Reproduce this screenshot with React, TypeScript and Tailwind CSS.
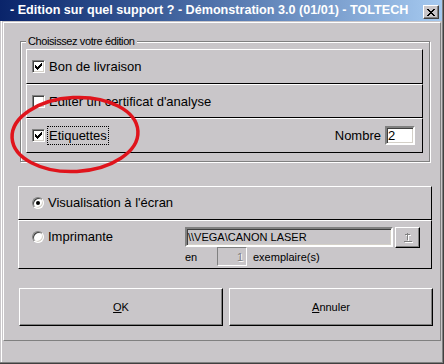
const FACE = "bg-[#c9c6c9]";

function CheckBox({ checked }: { checked: boolean }) {
  const px = [
    [6, 0, 1], [5, 1, 2], [0, 2, 1], [4, 2, 3], [0, 3, 2], [3, 3, 3], [0, 4, 5], [1, 5, 3], [2, 6, 1],
  ];
  return (
    <span className="flex h-[13px] w-[13px] shrink-0 items-center justify-center border border-t-[#808080] border-l-[#808080] border-b-white border-r-white bg-white shadow-[inset_1px_1px_0_#404040,inset_-1px_-1px_0_#d4d0c8]">
      {checked && (
        <svg width="7" height="7" viewBox="0 0 7 7" shapeRendering="crispEdges">
          {px.map(([x, y, w]) => (
            <rect key={`${x}-${y}`} x={x} y={y} width={w} height={1} fill="#000" />
          ))}
        </svg>
      )}
    </span>
  );
}

function Radio({ checked }: { checked: boolean }) {
  return (
    <span className="flex h-[12px] w-[12px] shrink-0 items-center justify-center rounded-full border border-t-[#808080] border-l-[#808080] border-b-white border-r-white bg-white shadow-[inset_1px_1px_0_#404040,inset_-1px_-1px_0_#d4d0c8]">
      {checked && <span className="h-[4px] w-[4px] rounded-full bg-black" />}
    </span>
  );
}

function PushButton({ children }: { children: React.ReactNode }) {
  return (
    <div className="flex h-[38px] w-[204px] items-center justify-center border border-t-white border-l-white border-b-black border-r-black shadow-[inset_-1px_-1px_0_#808080] text-[11px] text-black">
      {children}
    </div>
  );
}

export default function App() {
  return (
    <div className={`relative h-[364px] w-[444px] overflow-hidden border-r border-b border-r-[#404040] border-b-[#404040] ${FACE} font-['Liberation_Sans',Arial,sans-serif] text-black`}>
      <div className="flex h-full flex-col border-r border-b border-r-[#808080] border-b-[#808080]">
        {/* Title bar */}
        <div className="flex h-[21px] shrink-0 items-start justify-between bg-linear-to-r from-[#0a246a] to-[#a6caf0] pl-[10px]">
          <span className="mt-[3px] text-[12.6px] font-bold leading-[15px] text-white">
            - Edition sur quel support ? - Démonstration 3.0 (01/01) - TOLTECH
          </span>
          <div className={`mt-[5px] mr-[3px] flex h-[14px] w-[16px] items-center justify-center border border-t-white border-l-white border-b-[#404040] border-r-[#404040] ${FACE} shadow-[inset_-1px_-1px_0_#808080]`}>
            <svg width="8" height="7" viewBox="0 0 8 7" shapeRendering="crispEdges">
              <path d="M0 0h2v1h1v1h2V1h1V0h2v1H7v1H6v1H5v1h1v1h1v1h1v1H6V6H5V5H3v1H2v1H0V6h1V5h1V4h1V3H2V2H1V1H0z" fill="#000" />
            </svg>
          </div>
        </div>

        {/* Body */}
        <div className="flex-1 pl-[1px]">
          <div className="h-full border-l border-l-white pl-[1px] pt-[1px]">
            <div className="h-[319px] w-[438px] border border-t-white border-l-white border-b-[#808080] border-r-[#808080]">
              {/* Choisissez votre édition */}
              <div className="relative ml-[16px] mt-[18px] w-[410px] border border-[#808080] pl-[5px] pt-[7px] pb-[8px] shadow-[inset_1px_1px_0_#fff,1px_1px_0_#fff]">
                <span className={`absolute left-[5px] top-[-8px] px-[2px] text-[11px] leading-[14px] tracking-[-0.4px] ${FACE}`}>
                  Choisissez votre édition
                </span>
                <div className="w-[397px] text-[13px] leading-[17px]">
                  <div className="flex h-[35px] items-center border-t border-l border-r border-b border-t-white border-l-white border-r-black border-b-black pl-[5px]">
                    <CheckBox checked />
                    <span className="ml-[2px] border border-transparent px-[1px]">Bon de livraison</span>
                  </div>
                  <div className="flex h-[34px] items-center border-t border-l border-r border-b border-t-white border-l-white border-r-black border-b-black pl-[5px]">
                    <CheckBox checked={false} />
                    <span className="ml-[2px] border border-transparent px-[1px]">Editer un certificat d'analyse</span>
                  </div>
                  <div className="flex h-[35px] items-center border-t border-l border-r border-b border-t-white border-l-white border-r-black border-b-black pl-[5px] pr-[7px]">
                    <CheckBox checked />
                    <span className="ml-[2px] border border-dotted border-black px-[1px]">Etiquettes</span>
                    <span className="ml-auto">Nombre</span>
                    <div className="ml-[4px] flex h-[19px] w-[30px] items-center border-2 border-t-[#808080] border-l-[#808080] border-b-white border-r-white bg-white pl-[1px] shadow-[inset_1px_1px_0_#404040,inset_-1px_-1px_0_#d4d0c8]">
                      2
                    </div>
                  </div>
                </div>
              </div>

              {/* Sortie */}
              <div className="ml-[14px] mt-[24px] w-[414px] text-[13px] leading-[16px]">
                <div className="flex h-[34px] items-center border-t border-l border-r border-b border-t-white border-l-white border-r-black border-b-black pl-[13px]">
                  <Radio checked />
                  <span className="ml-[4px]">Visualisation à l'écran</span>
                </div>
                <div className="flex h-[49px] items-start border-t border-l border-r border-b border-t-white border-l-white border-r-black border-b-black pl-[13px]">
                  <div className="flex w-[153px] items-center pt-[8px]">
                    <Radio checked={false} />
                    <span className="ml-[4px]">Imprimante</span>
                  </div>
                  <div className="flex flex-col pt-[6px] text-[11px] leading-[14px]">
                    <div className="flex h-[20px] items-start gap-[2px]">
                      <div className="flex h-[20px] w-[208px] items-center border-2 border-t-[#808080] border-l-[#808080] border-b-white border-r-white pl-[1px] shadow-[inset_1px_1px_0_#404040,inset_-1px_-1px_0_#d4d0c8]">
                        \\VEGA\CANON LASER
                      </div>
                      <div className="flex h-[21px] w-[25px] items-center justify-center border border-t-white border-l-white border-b-black border-r-black shadow-[inset_-1px_-1px_0_#808080]">
                        <svg width="12" height="13" viewBox="0 0 12 13" shapeRendering="crispEdges">
                          <path d="M5 2h1v7H5zM3 3h5v1H3zM2 10h8v1H2z" fill="#fff" transform="translate(1 1)" />
                          <path d="M5 2h1v7H5zM3 3h5v1H3zM2 10h8v1H2z" fill="#808080" />
                        </svg>
                      </div>
                    </div>
                    <div className="flex h-[19px] items-center">
                      <span className="w-[32px]">en</span>
                      <div className="flex h-[19px] w-[30px] items-center justify-end border border-t-[#808080] border-l-[#808080] border-b-white border-r-white pr-[3px] text-[#808080] [text-shadow:1px_1px_0_#fff]">
                        1
                      </div>
                      <span className="ml-[6px]">exemplaire(s)</span>
                    </div>
                  </div>
                </div>
              </div>

              {/* Buttons */}
              <div className="ml-[15px] mt-[19px] flex gap-[6px]">
                <PushButton>
                  <span className="underline">O</span>K
                </PushButton>
                <PushButton>
                  <span className="underline">A</span>nnuler
                </PushButton>
              </div>
            </div>
          </div>
        </div>
      </div>

      {/* Red annotation circle */}
      <svg className="pointer-events-none absolute inset-0" width="444" height="364" viewBox="0 0 444 364">
        <ellipse cx="75" cy="134.5" rx="63" ry="37" fill="none" stroke="#e0141c" strokeWidth="3.5" transform="rotate(-3 75 134.5)" />
      </svg>
    </div>
  );
}
